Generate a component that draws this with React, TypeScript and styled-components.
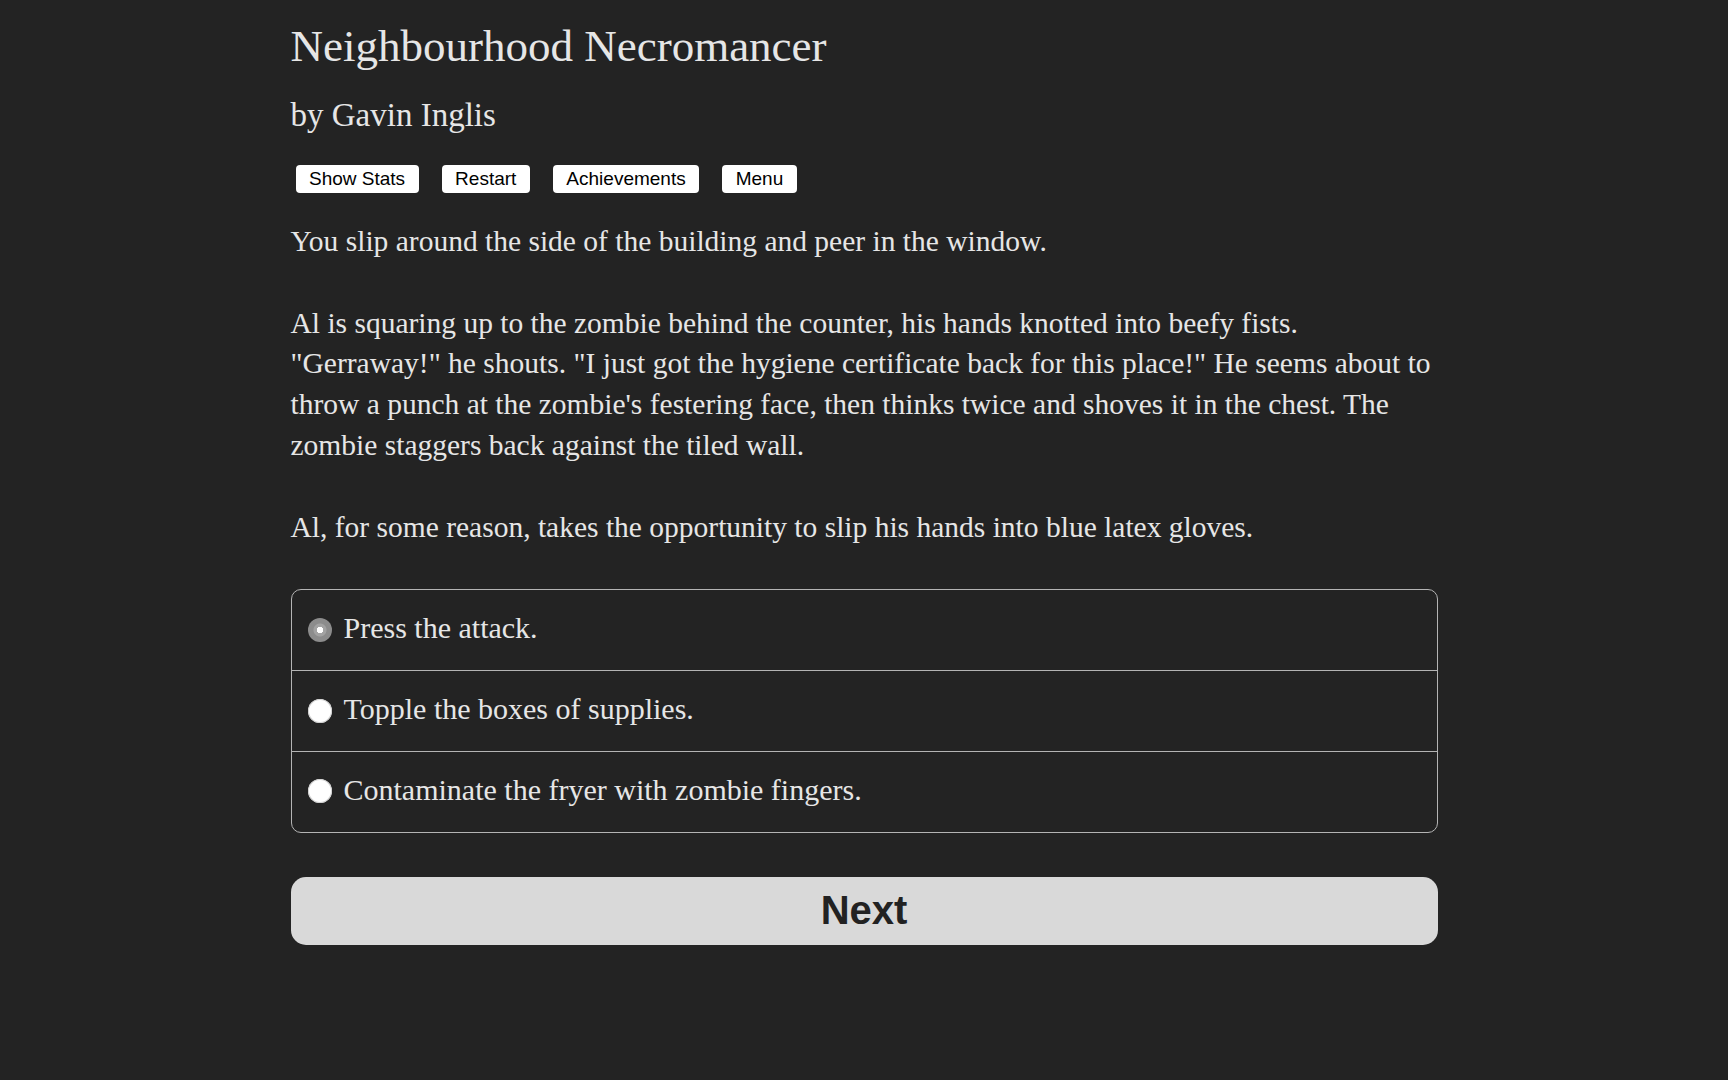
import * as React from 'react'
import styled, { createGlobalStyle } from 'styled-components'

const GlobalStyle = createGlobalStyle`
  html, body {
    margin: 0;
    padding: 0;
    background-color: #232323;
  }
  body {
    font-family: "Liberation Serif", "Times New Roman", serif;
    color: #e6e6e6;
  }
`

const paragraphs = [
  'You slip around the side of the building and peer in the window.',
  'Al is squaring up to the zombie behind the counter, his hands knotted into beefy fists. "Gerraway!" he shouts. "I just got the hygiene certificate back for this place!" He seems about to throw a punch at the zombie\'s festering face, then thinks twice and shoves it in the chest. The zombie staggers back against the tiled wall.',
  'Al, for some reason, takes the opportunity to slip his hands into blue latex gloves.'
]

const choices = [
  'Press the attack.',
  'Topple the boxes of supplies.',
  'Contaminate the fryer with zombie fingers.'
]

const menuButtons = ['Show Stats', 'Restart', 'Achievements', 'Menu']

export default function App() {
  const [picked, setPicked] = React.useState(0)

  return (
    <>
      <GlobalStyle />
      <Page>
        <Title>Neighbourhood Necromancer</Title>
        <Author>by Gavin Inglis</Author>
        <Toolbar>
          {menuButtons.map((label) => (
            <ToolButton key={ label }>{ label }</ToolButton>
          ))}
        </Toolbar>
        <Story>
          {paragraphs.map((text, i) => (
            <Paragraph key={ i }>{ text }</Paragraph>
          ))}
        </Story>
        <ChoiceList>
          {choices.map((text, i) => (
            <ChoiceRow key={ text }>
              <Radio
                type='radio'
                name='choice'
                checked={ picked === i }
                onChange={ () => setPicked(i) }
              />
              <span>{ text }</span>
            </ChoiceRow>
          ))}
        </ChoiceList>
        <NextButton>Next</NextButton>
      </Page>
    </>
  )
}

const Page = styled.main`
  width: 1147px;
  margin: 0 auto;
  padding: 20px 0 120px;
  display: flex;
  flex-direction: column;
`

const Title = styled.h1`
  margin: 0;
  font-size: 45px;
  font-weight: normal;
  line-height: 52px;
`

const Author = styled.h2`
  margin: 23px 0 0;
  font-size: 33px;
  font-weight: normal;
  line-height: 40px;
`

const Toolbar = styled.div`
  display: flex;
  gap: 23px;
  margin: 30px 0 0 5px;
`

const ToolButton = styled.button`
  height: 28px;
  padding: 0 13.5px;
  border: none;
  border-radius: 4px;
  background-color: #ffffff;
  color: #000000;
  font-family: "Liberation Sans", Arial, sans-serif;
  font-size: 19px;
  line-height: 28px;
  cursor: pointer;
`

const Story = styled.div`
  margin-top: 28px;
  font-size: 29.5px;
  line-height: 40.8px;
`

const Paragraph = styled.p`
  margin: 0 0 40.8px;

  &:last-child {
    margin-bottom: 0;
  }
`

const ChoiceList = styled.fieldset`
  margin: 42px 0 0;
  padding: 0;
  border: 1px solid #b4b4b4;
  border-radius: 10px;
  display: flex;
  flex-direction: column;
`

const ChoiceRow = styled.label`
  display: flex;
  align-items: center;
  gap: 12px;
  padding: 18px 16px 21px;
  font-size: 30px;
  line-height: 40.8px;
  cursor: pointer;

  & + & {
    border-top: 1px solid #b4b4b4;
  }
`

const Radio = styled.input`
  appearance: none;
  flex: none;
  width: 24px;
  height: 24px;
  margin: 2px 0 0;
  border-radius: 50%;
  background-color: #ffffff;
  box-shadow: inset 0 0 0 1px #d0d0d0;
  cursor: pointer;

  &:checked {
    background: radial-gradient(circle, #ffffff 0 3px, #a2a2a2 3.5px 6px, #8c8c8c 7px);
    box-shadow: none;
  }
`

const NextButton = styled.button`
  margin-top: 44px;
  height: 68px;
  border: none;
  border-radius: 15px;
  background-color: #d9d9d9;
  color: #222222;
  font-family: "Liberation Sans", Arial, sans-serif;
  font-size: 40px;
  font-weight: bold;
  cursor: pointer;
`
